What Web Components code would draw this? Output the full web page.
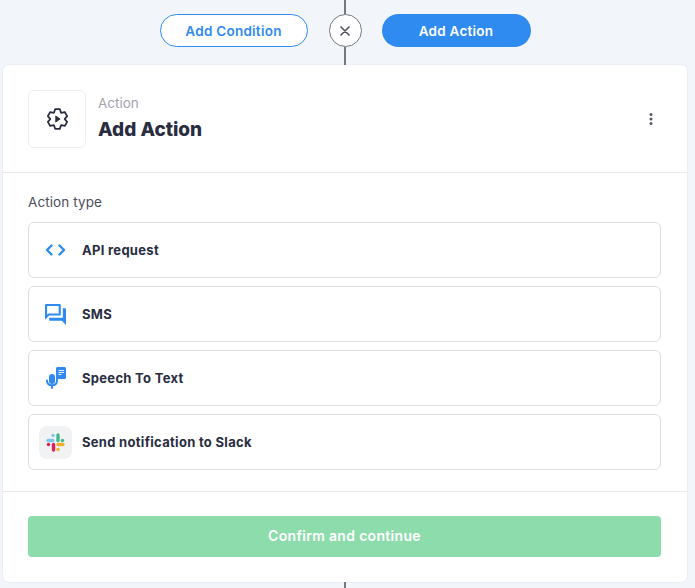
<!DOCTYPE html>
<html>
<head>
<meta charset="utf-8">
<title>Add Action</title>
<style>
    html, body { margin: 0; height: 100%; }
    body {
        background: #f2f5fa;
        font-family: Inter, 'Noto Sans', sans-serif;
        color: #292d3f;
        overflow: hidden;
    }
</style>
</head>
<body>
<flow-builder></flow-builder>

<script>
// Engranaje de 6 dientes para el icono de la cabecera
function gearPath(cx, cy, outer, inner) {
    const pts = [];
    for (let i = 0; i < 6; i++) {
        const a = (i * 60 - 90) * Math.PI / 180;
        [[inner, -0.5], [outer, -0.24], [outer, 0.24], [inner, 0.5]].forEach(([r, d]) => {
            pts.push((cx + r * Math.cos(a + d)).toFixed(2) + ' ' + (cy + r * Math.sin(a + d)).toFixed(2));
        });
    }
    return 'M' + pts.join('L') + 'z';
}

// Barra superior con las dos acciones y el conector
class FlowToolbar extends HTMLElement {
    constructor() {
        super();
        this.attachShadow({ mode: 'open' });
    }
    connectedCallback() {
        this.shadowRoot.innerHTML = `
            <style>
                :host { display: flex; justify-content: center; height: 65px; padding-right: 5px; }
                .btn {
                    box-sizing: border-box;
                    height: 33px;
                    margin-top: 14px;
                    border-radius: 17px;
                    display: flex;
                    align-items: center;
                    justify-content: center;
                    font-size: 13.5px;
                    font-weight: 600;
                    letter-spacing: 0.25px;
                }
                .outline { width: 148px; background: #fff; border: 1.5px solid #2f8bf0; color: #2f8bf0; }
                .solid { width: 149px; background: #2f8bf0; color: #fff; }
                .connector { width: 33px; margin: 0 20px 0 21px; display: flex; flex-direction: column; align-items: center; }
                .line { width: 1.5px; background: #77787f; }
                .line.top { height: 14px; }
                .line.bottom { flex: 1; }
                .close {
                    box-sizing: border-box;
                    width: 33px;
                    height: 33px;
                    border-radius: 50%;
                    border: 1.5px solid #77787f;
                    background: #fff;
                    display: flex;
                    align-items: center;
                    justify-content: center;
                }
            </style>
            <div class="btn outline">Add Condition</div>
            <div class="connector">
                <div class="line top"></div>
                <div class="close">
                    <svg width="10" height="10" viewBox="0 0 10 10"><path d="M1 1l8 8M9 1l-8 8" stroke="#55565f" stroke-width="1.7" stroke-linecap="round" fill="none"/></svg>
                </div>
                <div class="line bottom"></div>
            </div>
            <div class="btn solid">Add Action</div>
        `;
    }
}
customElements.define('flow-toolbar', FlowToolbar);

// Fila de tipo de accion: icono en el slot "icon" y texto en el slot por defecto
class ActionRow extends HTMLElement {
    constructor() {
        super();
        this.attachShadow({ mode: 'open' });
    }
    connectedCallback() {
        this.shadowRoot.innerHTML = `
            <style>
                :host {
                    box-sizing: border-box;
                    display: flex;
                    align-items: center;
                    height: 56px;
                    border: 1px solid #dcdfe3;
                    border-radius: 6px;
                    background: #fff;
                    font-size: 13px;
                    font-weight: 700;
                    letter-spacing: 0.3px;
                    color: #292d3f;
                }
                .icon { width: 53px; flex: none; display: flex; justify-content: center; }
                .label { padding-bottom: 1px; }
            </style>
            <div class="icon"><slot name="icon"></slot></div>
            <div class="label"><slot></slot></div>
        `;
    }
}
customElements.define('action-row', ActionRow);

// Tarjeta principal
class ActionCard extends HTMLElement {
    constructor() {
        super();
        this.attachShadow({ mode: 'open' });
    }
    connectedCallback() {
        this.shadowRoot.innerHTML = `
            <style>
                :host {
                    display: block;
                    box-sizing: border-box;
                    width: 684px;
                    height: 517px;
                    margin-left: 3px;
                    background: #fff;
                    border-radius: 6px;
                    box-shadow: 0 0 2px rgba(40, 50, 80, 0.12);
                }
                header {
                    box-sizing: border-box;
                    height: 108px;
                    padding: 25px 34px 0 25px;
                    display: flex;
                    border-bottom: 1px solid #e8eaed;
                }
                .tile {
                    box-sizing: border-box;
                    width: 58px;
                    height: 58px;
                    border: 1px solid #eceef0;
                    border-radius: 6px;
                    display: flex;
                    align-items: center;
                    justify-content: center;
                    flex: none;
                }
                .titles { margin-left: 12px; flex: 1; }
                .kicker { font-size: 13.5px; line-height: 16px; margin-top: 5px; color: #a2a4ab; }
                .title { font-size: 19px; line-height: 24px; margin-top: 7px; font-weight: 800; color: #292d3f; }
                .more { display: flex; align-items: center; height: 58px; }
                .body { box-sizing: border-box; height: 319px; padding: 20px 26px 0 25px; border-bottom: 1px solid #e8eaed; }
                .section { font-size: 13.5px; line-height: 18px; letter-spacing: 0.1px; color: #4b4e5c; margin-bottom: 11px; }
                .rows { display: flex; flex-direction: column; gap: 8px; }
                footer { padding: 24px 26px 0 25px; }
                .confirm {
                    height: 41px;
                    border-radius: 4px;
                    background: #8ddcac;
                    color: #fff;
                    font-size: 14px;
                    font-weight: 600;
                    letter-spacing: 0.32px;
                    display: flex;
                    align-items: center;
                    justify-content: center;
                    padding-bottom: 2px;
                    box-sizing: border-box;
                }
            </style>
            <header>
                <div class="tile">
                    <svg width="21" height="22" viewBox="0 0 24 24" fill="none" stroke="#292d3f" stroke-width="2" stroke-linejoin="round">
                        <path d="${gearPath(12, 12, 11.5, 8.300)}"/>
                        <path d="M10 8.500l5 3.500-5 3.500z" fill="#292d3f" stroke-width="1"/>
                    </svg>
                </div>
                <div class="titles">
                    <div class="kicker">Action</div>
                    <div class="title">Add Action</div>
                </div>
                <div class="more">
                    <svg width="4" height="12" viewBox="0 0 4 12" fill="#55586a"><circle cx="2" cy="1.500" r="1.500"/><circle cx="2" cy="6" r="1.500"/><circle cx="2" cy="10.500" r="1.500"/></svg>
                </div>
            </header>
            <div class="body">
                <div class="section">Action type</div>
                <div class="rows"><slot></slot></div>
            </div>
            <footer>
                <div class="confirm">Confirm and continue</div>
            </footer>
        `;
    }
}
customElements.define('action-card', ActionCard);

// Raiz de la pagina
class FlowBuilder extends HTMLElement {
    constructor() {
        super();
        this.attachShadow({ mode: 'open' });
    }
    connectedCallback() {
        this.shadowRoot.innerHTML = `
            <style>
                :host { display: block; }
                .tail { width: 1.5px; height: 6px; background: #77787f; margin-left: 344px; }
            </style>
            <flow-toolbar></flow-toolbar>
            <action-card>
                <action-row>
                    <svg slot="icon" width="21" height="12" viewBox="0 0 21 12" fill="none" stroke="#2f8bf0" stroke-width="2.400" stroke-linecap="round" stroke-linejoin="round"><path d="M6.500 1.500L2 6l4.500 4.500M14.500 1.500L19 6l-4.500 4.500"/></svg>
                    API request
                </action-row>
                <action-row>
                    <svg slot="icon" width="21" height="21" viewBox="2 2 20 20" fill="#2f8bf0"><path d="M15 4v7H5.170L4 12.170V4h11m1-2H3c-.55 0-1 .45-1 1v14l4-4h10c.55 0 1-.45 1-1V3c0-.55-.45-1-1-1zm5 4h-2v9H6v2c0 .55.45 1 1 1h11l4 4V7c0-.55-.45-1-1-1z"/></svg>
                    SMS
                </action-row>
                <action-row>
                    <svg slot="icon" width="20" height="22" viewBox="0 0 20 22">
                        <path d="M11.500 0h7a1.500 1.500 0 0 1 1.500 1.500v9a1.500 1.500 0 0 1-1.500 1.500h-6l-2.500 2V1.500A1.500 1.500 0 0 1 11.500 0z" fill="#2f8bf0"/>
                        <path d="M12.500 3.500h5.500M12.500 5.500h5.500M12.500 7.500h3" stroke="#fff" stroke-width=".9"/>
                        <rect x="3" y="7" width="6" height="10" rx="3" fill="#2f8bf0"/>
                        <path d="M1 13.500c0 3.200 2.200 4.800 5 4.800s5-1.600 5-4.800M6 18.300V21" fill="none" stroke="#2f8bf0" stroke-width="2" stroke-linecap="round"/>
                    </svg>
                    Speech To Text
                </action-row>
                <action-row>
                    <span slot="icon" style="display:flex;width:33px;height:33px;border-radius:8px;background:#f1f2f4;align-items:center;justify-content:center;">
                        <svg width="19" height="19" viewBox="0 0 19 19" fill="none" stroke-linecap="round" stroke-width="3.400">
                            <path d="M2 7.500h5" stroke="#7fc6ee"/>
                            <path d="M7 2.500v.1" stroke="#7fc6ee"/>
                            <path d="M12 2v5.500" stroke="#3fb98c"/>
                            <path d="M16.500 7.500v.1" stroke="#3fb98c"/>
                            <path d="M12 11.500h5" stroke="#ecb22e"/>
                            <path d="M12 16.500v.1" stroke="#ecb22e"/>
                            <path d="M7.500 11.500V17" stroke="#e01e5a"/>
                            <path d="M2.500 11.500v.1" stroke="#e01e5a"/>
                        </svg>
                    </span>
                    Send notification to Slack
                </action-row>
            </action-card>
            <div class="tail"></div>
        `;
    }
}
customElements.define('flow-builder', FlowBuilder);
</script>
</body>
</html>
